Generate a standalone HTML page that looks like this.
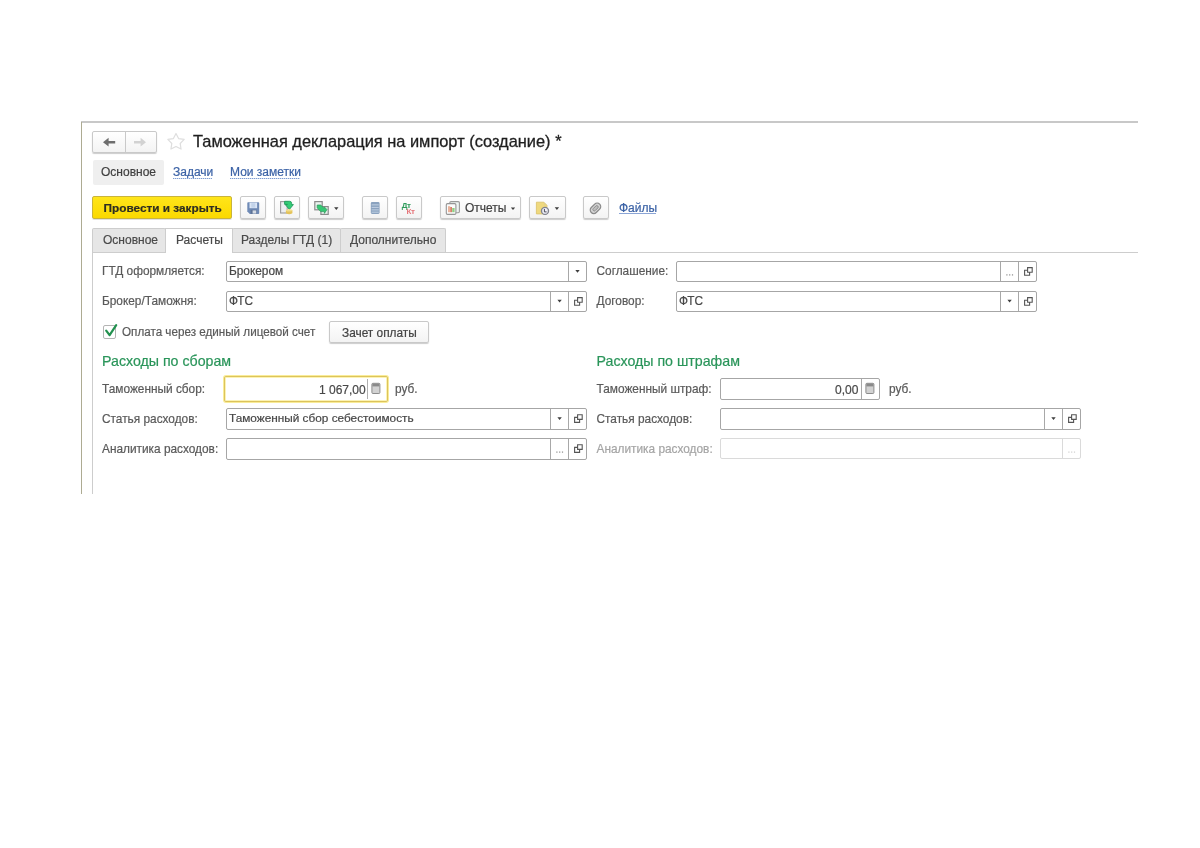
<!DOCTYPE html>
<html><head><meta charset="utf-8">
<style>
html,body{margin:0;padding:0;background:#fff;width:1200px;height:848px;overflow:hidden}
body{font-family:"Liberation Sans",sans-serif;color:#4a4a4a;position:relative;will-change:transform;filter:blur(0.4px);-webkit-text-stroke:0.2px currentColor}
.a{position:absolute;white-space:nowrap;line-height:1}
.t{font-size:12px;line-height:1;position:absolute;white-space:nowrap}
.btn{position:absolute;box-sizing:border-box;border:1px solid #c9c9c9;border-radius:2px;background:linear-gradient(#ffffff,#f3f3f3);box-shadow:0 1px 1px rgba(0,0,0,.20)}
.fld{position:absolute;box-sizing:border-box;border:1px solid #a6a6a6;border-radius:2px;background:#fff}
.sep{position:absolute;top:0;bottom:0;width:1px;background:#a8a8a8}
.lnk{color:#3b63a8;padding-bottom:1px;background-image:linear-gradient(to right,#86a3d4 70%,#c5d3ec 70%);background-size:2px 1px;background-repeat:repeat-x;background-position:0 13.5px}
.lbl{color:#5a5a5a;font-size:11.85px;margin-top:0.5px}
.grn{color:#2a955a;-webkit-text-stroke:0.2px #2a955a;font-size:14.2px;line-height:1;position:absolute;white-space:nowrap}
.dd{position:absolute;width:0;height:0;border-left:3px solid transparent;border-right:3px solid transparent;border-top:3px solid #3c3c3c}
.tab{position:absolute;top:228px;height:24.5px;box-sizing:border-box;border:1px solid #cdcdcd;border-bottom:none;border-radius:2px 2px 0 0;background:#e6e6e6}
.lk{color:#3b62a6}
.ul{height:1px;background-image:linear-gradient(to right,#7f9dd2 65%,#d0dcf0 65%);background-size:2px 1px}
</style></head>
<body>
<!-- window frame -->
<div class="a" style="left:81px;top:121px;width:1057px;height:2px;background:#c8c8c8"></div>
<div class="a" style="left:81px;top:122px;width:1px;height:372px;background:#adab92"></div>

<!-- nav buttons -->
<div class="btn" style="left:92px;top:131px;width:65px;height:22px"></div>
<div class="a" style="left:125px;top:132px;width:1px;height:20px;background:#c9c9c9"></div>

<!-- star -->

<!-- title -->
<div class="a" style="left:193px;top:132.6px;font-size:16.4px;color:#1f1f1f;-webkit-text-stroke:0.3px #1f1f1f">Таможенная декларация на импорт (создание) *</div>

<!-- nav panel -->
<div class="a" style="left:93px;top:160px;width:71px;height:25px;background:#efefef;border-radius:2px"></div>
<div class="t" style="left:101px;top:165.6px;color:#404040">Основное</div>
<div class="t lk" style="left:173px;top:165.6px">Задачи</div>
<div class="a ul" style="left:173px;top:178px;width:39px"></div>
<div class="t lk" style="left:230px;top:165.6px">Мои заметки</div>
<div class="a ul" style="left:230px;top:178px;width:70px"></div>

<!-- toolbar -->
<div class="a" style="left:92px;top:196px;width:140px;height:23px;box-sizing:border-box;border:1px solid #c9b43c;border-radius:2px;background:linear-gradient(#ffe51a,#fbd900);box-shadow:0 1px 0 rgba(0,0,0,.12)"></div>
<div class="a" style="left:103.5px;top:202.8px;font-size:11.8px;font-weight:bold;color:#2e2e22">Провести и закрыть</div>

<div class="btn" style="left:240px;top:196px;width:26px;height:23px"></div>
<div class="btn" style="left:274px;top:196px;width:26px;height:23px"></div>
<div class="btn" style="left:308px;top:196px;width:36px;height:23px"></div>
<div class="btn" style="left:362px;top:196px;width:26px;height:23px"></div>
<div class="btn" style="left:396px;top:196px;width:26px;height:23px"></div>
<div class="btn" style="left:440px;top:196px;width:81px;height:23px"></div>
<div class="t" style="left:465px;top:202.4px;color:#404040">Отчеты</div>
<div class="btn" style="left:529px;top:196px;width:37px;height:23px"></div>
<div class="btn" style="left:583px;top:196px;width:26px;height:23px"></div>
<div class="t lk" style="left:619px;top:201.6px">Файлы</div>
<div class="a" style="left:619px;top:212.5px;width:37px;height:1px;background:#8ba5d6"></div>

<!-- tabs -->
<div class="a" style="left:92px;top:251px;width:1px;height:243px;background:#cdcdcd"></div>
<div class="tab" style="left:92px;width:74px"></div>
<div class="t" style="left:103px;top:234.3px;color:#4a4a4a">Основное</div>
<div class="a" style="left:165px;top:228px;width:68px;height:25px;box-sizing:border-box;border:1px solid #cdcdcd;border-bottom:none;background:#fff"></div>
<div class="t" style="left:176px;top:234.3px;color:#4a4a4a">Расчеты</div>
<div class="tab" style="left:232px;width:109px"></div>
<div class="t" style="left:241px;top:234.3px;color:#4a4a4a">Разделы ГТД (1)</div>
<div class="tab" style="left:340px;width:106px"></div>
<div class="t" style="left:350px;top:234.3px;color:#4a4a4a">Дополнительно</div>
<div class="a" style="left:92px;top:252px;width:1046px;height:1px;background:#cdcdcd"></div>
<div class="a" style="left:166px;top:252px;width:66px;height:1px;background:#fff"></div>

<!-- form left column -->
<div class="t lbl" style="left:102px;top:265.1px">ГТД оформляется:</div>
<div class="fld" style="left:226px;top:261px;width:361px;height:21px"><div class="sep" style="left:341px"></div></div>
<div class="t" style="left:229px;top:265.6px;color:#484848;font-size:11.85px;margin-top:0.2px">Брокером</div>

<div class="t lbl" style="left:102px;top:295.1px">Брокер/Таможня:</div>
<div class="fld" style="left:226px;top:291px;width:361px;height:21px"><div class="sep" style="left:323px"></div><div class="sep" style="left:341px"></div></div>
<div class="t" style="left:229px;top:295.6px;color:#484848;font-size:11.85px;margin-top:0.2px">ФТС</div>

<!-- checkbox -->
<div class="a" style="left:103px;top:325px;width:13px;height:14px;box-sizing:border-box;border:1px solid #b4b4b4;border-radius:2px;background:#fff"></div>
<div class="t lbl" style="left:122px;top:325.4px;font-size:12px;transform:scaleX(0.972);transform-origin:0 0">Оплата через единый лицевой счет</div>
<div class="btn" style="left:329px;top:321px;width:100px;height:22px"></div>
<div class="t" style="left:342px;top:327.5px;color:#444;font-size:11.85px">Зачет оплаты</div>

<div class="grn" style="left:102px;top:354.1px">Расходы по сборам</div>

<div class="t lbl" style="left:102px;top:383.2px">Таможенный сбор:</div>
<div class="a" style="left:224px;top:376px;width:164px;height:26px;box-sizing:border-box;border:1px solid #dcc35c;border-radius:2px;background:#fff;box-shadow:0 0 0 1px #f9ec98, inset 0 0 0 1px #fcf3b4"></div>
<div class="a" style="left:367px;top:379px;width:1px;height:20px;background:#b0b0b0"></div>
<div class="t" style="left:319px;top:384.1px;color:#484848">1 067,00</div>
<div class="t lbl" style="left:395px;top:383.2px">руб.</div>

<div class="t lbl" style="left:102px;top:413px">Статья расходов:</div>
<div class="fld" style="left:226px;top:408px;width:361px;height:22px"><div class="sep" style="left:323px"></div><div class="sep" style="left:341px"></div></div>
<div class="t" style="left:229px;top:413.2px;color:#474747;font-size:11.8px">Таможенный сбор себестоимость</div>

<div class="t lbl" style="left:102px;top:443px">Аналитика расходов:</div>
<div class="fld" style="left:226px;top:438px;width:361px;height:22px"><div class="sep" style="left:323px"></div><div class="sep" style="left:341px"></div></div>

<!-- form right column -->
<div class="t lbl" style="left:596.5px;top:265.1px">Соглашение:</div>
<div class="fld" style="left:676px;top:261px;width:361px;height:21px"><div class="sep" style="left:323px"></div><div class="sep" style="left:341px"></div></div>

<div class="t lbl" style="left:596.5px;top:295.1px">Договор:</div>
<div class="fld" style="left:676px;top:291px;width:361px;height:21px"><div class="sep" style="left:323px"></div><div class="sep" style="left:341px"></div></div>
<div class="t" style="left:679px;top:295.6px;color:#484848;font-size:11.85px;margin-top:0.2px">ФТС</div>

<div class="grn" style="left:596.5px;top:354.1px">Расходы по штрафам</div>

<div class="t lbl" style="left:596.5px;top:383.2px">Таможенный штраф:</div>
<div class="fld" style="left:720px;top:378px;width:160px;height:22px"><div class="sep" style="left:140px"></div></div>
<div class="t" style="left:835px;top:384.1px;color:#484848">0,00</div>
<div class="t lbl" style="left:889px;top:383.2px">руб.</div>

<div class="t lbl" style="left:596.5px;top:413px">Статья расходов:</div>
<div class="fld" style="left:720px;top:408px;width:361px;height:22px"><div class="sep" style="left:323px"></div><div class="sep" style="left:341px"></div></div>

<div class="t" style="left:596.5px;top:443.5px;color:#a5a5a5;font-size:11.85px">Аналитика расходов:</div>
<div class="fld" style="left:720px;top:438px;width:361px;height:21px;border-color:#dadada"><div class="sep" style="left:341px;background:#dadada"></div></div>


<svg class="a" style="left:0;top:0" width="1200" height="848" viewBox="0 0 1200 848">
<!-- nav arrows -->
<path d="M103 142.2 L108.6 137.8 L108.6 141 L115.2 141 L115.2 143.4 L108.6 143.4 L108.6 146.6 Z" fill="#6e6e6e"/>
<path d="M146 142.2 L140.6 137.8 L140.6 141 L134 141 L134 143.4 L140.6 143.4 L140.6 146.6 Z" fill="#d2d2d2"/>
<!-- star -->
<path d="M176.00 133.50 L178.59 138.54 L184.18 139.44 L180.18 143.46 L181.05 149.06 L176.00 146.50 L170.95 149.06 L171.82 143.46 L167.82 139.44 L173.41 138.54 Z" fill="none" stroke="#dedede" stroke-width="1.2" stroke-linejoin="round"/>
<!-- floppy -->
<path d="M247.3 203 Q247.3 202.2 248.1 202.2 L258.4 202.2 Q259.2 202.2 259.2 203 L259.2 213.3 Q259.2 214.1 258.4 214.1 L249.8 214.1 L247.3 211.6 Z" fill="#6f8ab6"/>
<rect x="249.5" y="202.6" width="7.6" height="5.6" fill="#dbe6f6"/>
<rect x="251.3" y="203.2" width="4" height="4.4" fill="#c2d3ea"/>
<rect x="250.6" y="209.8" width="6" height="4" fill="#5e7396"/>
<rect x="252.6" y="210.4" width="3.6" height="3.2" fill="#d5dbe4"/>
<!-- post icon -->
<rect x="280.6" y="201.6" width="6.6" height="11.4" fill="#eceef1" stroke="#9a9a9a" stroke-width="1.1"/>
<path d="M284.6 201.3 L289.6 201.3 Q291.6 201.3 291.6 203.3 L291.6 204.6 L293.4 204.6 L289.4 209.4 L285.3 204.6 L287.4 204.6 L287.4 204.3 L284.6 204.3 Z" fill="#33cc76" stroke="#239a5c" stroke-width=".9" stroke-linejoin="round"/>
<path d="M285.9 210.3 Q289.2 209 292.4 210.3 L292.4 213.3 Q289.2 215.2 285.9 213.3 Z" fill="#e4c35a"/>
<ellipse cx="289.15" cy="210.4" rx="3.2" ry="1.1" fill="#f0dc8a"/>
<!-- copy icon -->
<rect x="314.8" y="201.6" width="7.4" height="8.2" fill="#eaf3ee" stroke="#8a8a8a" stroke-width="1.2"/>
<rect x="320.9" y="206.6" width="7.3" height="7.8" fill="#eaf3ee" stroke="#8a8a8a" stroke-width="1.2"/>
<path d="M317.2 205 L320.6 205 L324.4 208.4 L324.4 206.9 L327 209.6 L324.4 213.4 L324.4 211.6 L320.8 211.6 L317.2 208 Z" fill="#36c873" stroke="#2a9a5a" stroke-width=".7" stroke-linejoin="round"/>
<!-- list icon -->
<rect x="370.8" y="202.1" width="8.8" height="11.8" rx="1.3" fill="#8aa2bf"/>
<path d="M371.6 204.9 H378.8 M371.6 207.4 H378.8 M371.6 209.9 H378.8 M371.6 212.2 H378.8" stroke="#c7d6e8" stroke-width=".9"/>
<!-- At Kt -->
<text x="401.8" y="208.1" font-family="Liberation Sans" font-weight="bold" font-size="8" fill="#2e9b5a" letter-spacing="-0.4">Дт</text>
<text x="406.6" y="214.4" font-family="Liberation Sans" font-weight="bold" font-size="8" fill="#e57479" letter-spacing="-0.4">Кт</text>
<!-- reports icon -->
<rect x="449.8" y="201.6" width="9.6" height="11.2" rx="1.2" fill="#eef4f2" stroke="#9a9a9a" stroke-width="1.1"/>
<rect x="446.3" y="203.6" width="9.6" height="10.8" rx="1.2" fill="#fbfbfb" stroke="#959595" stroke-width="1.1"/>
<rect x="448" y="206.2" width="2.2" height="6" fill="#eab39c"/>
<rect x="450.2" y="207" width="1.8" height="5.2" fill="#d8806a"/>
<rect x="452.2" y="208" width="2.4" height="4.2" fill="#8fcf84"/>
<!-- yellow doc clock -->
<path d="M536.4 202.2 L543.8 202.2 L546.9 205.3 L546.9 213.9 L536.4 213.9 Z" fill="#efd97e" stroke="#dcc46e" stroke-width=".9"/>
<path d="M543.8 202.2 L543.8 205.3 L546.9 205.3" fill="#e2d08a"/>
<circle cx="545" cy="210.9" r="3.5" fill="#f2f2fa" stroke="#80838f" stroke-width="1.4"/>
<path d="M544.4 208.9 V211.9 H546.6" fill="none" stroke="#4a4a55" stroke-width="1"/>
<!-- paperclip -->
<g transform="rotate(-45 595.4 208.4)">
<rect x="589.6" y="204.9" width="11.8" height="7" rx="3.5" fill="#d4d4d4" stroke="#8a8a8a" stroke-width="1.3"/>
<rect x="592.4" y="207" width="6.4" height="2.8" rx="1.4" fill="#bdbdbd" stroke="#8a8a8a" stroke-width=".9"/>
</g>
<!-- dropdown arrows -->
<path d="M334.10 207.30 h4.4 l-2.20 2.7 z M510.80 207.40 h4.4 l-2.20 2.7 z M554.70 207.30 h4.4 l-2.20 2.7 z " fill="#3f3f3f"/>
<path d="M575.30 270.00 h4.4 l-2.20 2.7 z M557.40 299.80 h4.4 l-2.20 2.7 z M1007.40 299.80 h4.4 l-2.20 2.7 z M557.40 417.30 h4.4 l-2.20 2.7 z M1051.30 417.30 h4.4 l-2.20 2.7 z " fill="#3f3f3f"/>
<!-- open icons -->
<g fill="none" stroke="#555" stroke-width="1.1">
<path id="op" d="M1027.6 267.6 h4.6 v4.6 h-4.6 z M1027.6 270.2 h-3 v5 h5 v-3"/>
</g>
<g fill="none" stroke="#555" stroke-width="1.1">
<path d="M577.6 297.6 h4.6 v4.6 h-4.6 z M577.6 300.2 h-3 v5 h5 v-3"/>
<path d="M1027.6 297.6 h4.6 v4.6 h-4.6 z M1027.6 300.2 h-3 v5 h5 v-3"/>
<path d="M577.6 414.8 h4.6 v4.6 h-4.6 z M577.6 417.4 h-3 v5 h5 v-3"/>
<path d="M1071.6 414.8 h4.6 v4.6 h-4.6 z M1071.6 417.4 h-3 v5 h5 v-3"/>
<path d="M577.6 444.8 h4.6 v4.6 h-4.6 z M577.6 447.4 h-3 v5 h5 v-3"/>
</g>
<!-- ellipsis -->
<g fill="#8a8a8a">
<rect x="1006.3" y="274.3" width="1.2" height="1.2"/><rect x="1009.1" y="274.3" width="1.2" height="1.2"/><rect x="1011.9" y="274.3" width="1.2" height="1.2"/>
<rect x="556.3" y="451.5" width="1.2" height="1.2"/><rect x="559.1" y="451.5" width="1.2" height="1.2"/><rect x="561.9" y="451.5" width="1.2" height="1.2"/>
</g>
<g fill="#cfcfcf">
<rect x="1068.3" y="451.5" width="1.2" height="1.2"/><rect x="1071.1" y="451.5" width="1.2" height="1.2"/><rect x="1073.9" y="451.5" width="1.2" height="1.2"/>
</g>
<!-- calculators -->
<rect x="371.9" y="383.3" width="8" height="10.2" rx="1" fill="#d2d2d2" stroke="#8c8c8c" stroke-width="1"/>
<rect x="372.4" y="383.8" width="7" height="2.6" fill="#8a8a8a"/>
<rect x="865.9" y="383.3" width="8" height="10.2" rx="1" fill="#d2d2d2" stroke="#8c8c8c" stroke-width="1"/>
<rect x="866.4" y="383.8" width="7" height="2.6" fill="#8a8a8a"/>
<!-- checkbox check -->
<path d="M106.2 330.6 L109.6 335.2 L116.2 325.2" fill="none" stroke="#22914f" stroke-width="2.2" stroke-linejoin="round" stroke-linecap="round"/>
</svg>
</body></html>
